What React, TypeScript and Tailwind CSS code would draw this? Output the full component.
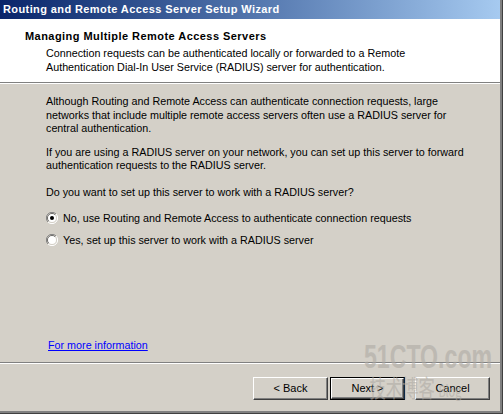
const ui = "font-['Liberation_Sans',Arial,sans-serif]";

function Radio({ checked }: { checked?: boolean }) {
  return (
    <svg width="12" height="12" viewBox="0 0 12 12" className="shrink-0">
      <path d="M10 2 A5.5 5.5 0 0 0 2 10" fill="none" stroke="#808080" />
      <path d="M9 3 A4.2 4.2 0 0 0 3 9" fill="none" stroke="#404040" />
      <path d="M2 10 A5.5 5.5 0 0 0 10 2" fill="none" stroke="#ffffff" />
      <circle cx="6" cy="6" r="4" fill="#ffffff" />
      {checked ? <circle cx="6" cy="6" r="2" fill="#000000" /> : null}
    </svg>
  );
}

function Button({ label, isDefault }: { label: string; isDefault?: boolean }) {
  const inner = (
    <div className="flex h-full w-full items-center justify-center border-t border-l border-t-white border-l-white border-r border-b border-r-[#404040] border-b-[#404040] bg-[#d4d0c8] shadow-[inset_-1px_-1px_0_#808080] text-[11px] text-black">
      {label}
    </div>
  );
  return isDefault ? (
    <div className="h-[23px] w-[75px] border border-black">{inner}</div>
  ) : (
    <div className="h-[23px] w-[75px]">{inner}</div>
  );
}

export default function App() {
  return (
    <div className={`${ui} relative h-[414px] w-[503px] overflow-hidden bg-[#d4d0c8] text-[10.75px] leading-[13px] text-black`}>
      <div className="flex h-full flex-col border-r border-b border-[#404040]">
        <div className="flex h-full flex-col border-r-2 border-b-2 border-r-[#808080] border-b-[#808080]">
          {/* title bar */}
          <div className="flex h-[19px] items-center bg-linear-to-r from-[#0a246a] to-[#a6caf0] pl-[3px] text-[11px] font-bold tracking-[0.4px] text-white">
            Routing and Remote Access Server Setup Wizard
          </div>

          {/* header */}
          <div className="h-[64px] border-b border-[#808080] bg-white pl-[25px] pt-[11px]">
            <div className="text-[11px] font-bold tracking-[0.45px]">Managing Multiple Remote Access Servers</div>
            <div className="mt-[3px] pl-[21px] leading-[14px]">
              Connection requests can be authenticated locally or forwarded to a Remote
              <br />
              Authentication Dial-In User Service (RADIUS) server for authentication.
            </div>
          </div>
          <div className="h-px bg-white" />

          {/* body */}
          <div className="flex flex-1 flex-col pl-[46px] pt-[11px]">
            <p className="leading-[13.5px]">
              Although Routing and Remote Access can authenticate connection requests, large
              <br />
              networks that include multiple remote access servers often use a RADIUS server for
              <br />
              central authentication.
            </p>
            <p className="mt-[10px] leading-[13.5px]">
              If you are using a RADIUS server on your network, you can set up this server to forward
              <br />
              authentication requests to the RADIUS server.
            </p>
            <p className="mt-[13px]">Do you want to set up this server to work with a RADIUS server?</p>
            <div className="mt-[13px] flex flex-col gap-[9px]">
              <div className="flex items-center gap-[5px]">
                <Radio checked />
                <span>No, use Routing and Remote Access to authenticate connection requests</span>
              </div>
              <div className="flex items-center gap-[5px]">
                <Radio />
                <span>Yes, set up this server to work with a RADIUS server</span>
              </div>
            </div>
            <div className="flex-1" />
            <a className="mb-[10px] ml-[2px] text-[#0000ff] underline">For more information</a>
          </div>

          {/* footer */}
          <div className="border-t border-t-[#808080]">
            <div className="h-px bg-white" />
          </div>
          <div className="flex h-[47px] items-start justify-end gap-[10px] pr-[10px] pt-[13px]">
            <div className="flex gap-[2px]">
              <Button label="< Back" />
              <Button label="Next >" isDefault />
            </div>
            <Button label="Cancel" />
          </div>
        </div>
      </div>

      {/* watermark */}
      <div className="pointer-events-none absolute left-[364px] top-[338px] flex origin-top-left scale-x-[0.68] flex-col items-start text-[#aeaaa4] opacity-60">
        <span className="text-[34px] font-bold leading-[36px]">51CTO.com</span>
        <span className="ml-[8px] font-['Noto_Sans_CJK_SC',sans-serif] text-[24px] leading-[26px]">
          技术博客 <span className="text-[16px]">Blog</span>
        </span>
      </div>
    </div>
  );
}
